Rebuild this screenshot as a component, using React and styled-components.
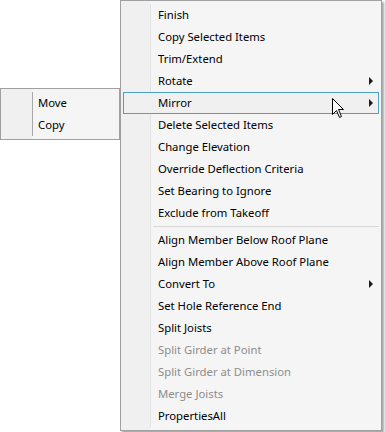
import React from "react";
import styled, { createGlobalStyle } from "styled-components";

const Global = createGlobalStyle`
  html, body { margin: 0; padding: 0; background: #ffffff; }
  body { font-family: "Noto Sans", "Segoe UI", sans-serif; }
`;

const Stage = styled.div`
  position: relative;
  width: 385px;
  height: 432px;
  overflow: hidden;
  background: #ffffff;
`;

const AppStrip = styled.div`
  position: absolute;
  left: 0;
  top: 138px;
  width: 97px;
  height: 2px;
  background: #e6bd85;
  &::after {
    content: "";
    position: absolute;
    right: -2px;
    top: 0;
    width: 2px;
    height: 2px;
    background: #2f6e2f;
  }
`;

const Menu = styled.div`
  position: absolute;
  left: ${(p) => p.$left}px;
  top: ${(p) => p.$top}px;
  width: ${(p) => p.$width}px;
  box-sizing: border-box;
  padding: 3px 2px;
  background: linear-gradient(to right, #f0f0f0 0, #f0f0f0 ${(p) => p.$gutter}px, #f5f5f5 ${(p) => p.$gutter}px);
  border: 1px solid #a0a0a0;
  box-shadow: ${(p) => (p.$shadow ? "2px 2px 2px rgba(0,0,0,0.35)" : "none")};
  display: flex;
  flex-direction: column;
  &::before {
    content: "";
    position: absolute;
    left: ${(p) => p.$gutter}px;
    top: 3px;
    bottom: 3px;
    width: 1px;
    background: ${(p) => p.$lineColor};
  }
`;

const Item = styled.div`
  position: relative;
  z-index: 1;
  height: 22px;
  box-sizing: border-box;
  display: flex;
  align-items: center;
  padding-left: ${(p) => p.$indent}px;
  padding-bottom: 2px;
  font-size: 11.3px;
  color: ${(p) => (p.$disabled ? "#8d8d8d" : "#000000")};
  border: 1px solid ${(p) => (p.$active ? "#4aa2c8" : "transparent")};
  background: ${(p) => (p.$active ? "#f0f0f0" : "transparent")};
  white-space: nowrap;
`;

const Arrow = styled.span`
  position: absolute;
  right: 5px;
  top: 50%;
  margin-top: -4px;
  width: 0;
  height: 0;
  border-top: 4px solid transparent;
  border-bottom: 4px solid transparent;
  border-left: 4px solid #1a1a1a;
`;

const Separator = styled.div`
  position: relative;
  z-index: 1;
  height: 5px;
  margin-left: ${(p) => p.$indent}px;
  display: flex;
  align-items: center;
  &::after {
    content: "";
    flex: 1;
    height: 1px;
    background: #d7d7d7;
  }
`;

const Cursor = styled.svg`
  position: absolute;
  left: 332px;
  top: 98px;
  z-index: 5;
`;

const mainItems = [
  { t: "Finish" },
  { t: "Copy Selected Items" },
  { t: "Trim/Extend" },
  { t: "Rotate", sub: true },
  { t: "Mirror", sub: true, active: true },
  { t: "Delete Selected Items" },
  { t: "Change Elevation" },
  { t: "Override Deflection Criteria" },
  { t: "Set Bearing to Ignore" },
  { t: "Exclude from Takeoff" },
  { sep: true },
  { t: "Align Member Below Roof Plane" },
  { t: "Align Member Above Roof Plane" },
  { t: "Convert To", sub: true },
  { t: "Set Hole Reference End" },
  { t: "Split Joists" },
  { t: "Split Girder at Point", disabled: true },
  { t: "Split Girder at Dimension", disabled: true },
  { t: "Merge Joists", disabled: true },
  { t: "PropertiesAll" },
];

export default function App() {
  return (
    <Stage>
      <Global />
      <AppStrip />
      <Menu $left={0} $top={88} $width={120} $gutter={31} $lineColor="#a8a8a8">
        <Item $indent={34}>Move</Item>
        <Item $indent={34}>Copy</Item>
      </Menu>
      <Menu $left={120} $top={0} $width={262} $gutter={29} $lineColor="#e2e2e2" $shadow>
        {mainItems.map((it, i) =>
          it.sep ? (
            <Separator key={i} $indent={30} />
          ) : (
            <Item key={i} $indent={34} $disabled={it.disabled} $active={it.active}>
              {it.t}
              {it.sub && <Arrow />}
            </Item>
          )
        )}
      </Menu>
      <Cursor width="14" height="22" viewBox="0 0 14 22">
        <path
          d="M0.5 0.5 L0.5 16.5 L4.5 12.5 L7.5 19.5 L9.5 18.5 L6.5 11.5 L11.5 11.5 Z"
          fill="#ffffff"
          stroke="#000000"
          strokeWidth="1"
        />
      </Cursor>
    </Stage>
  );
}
